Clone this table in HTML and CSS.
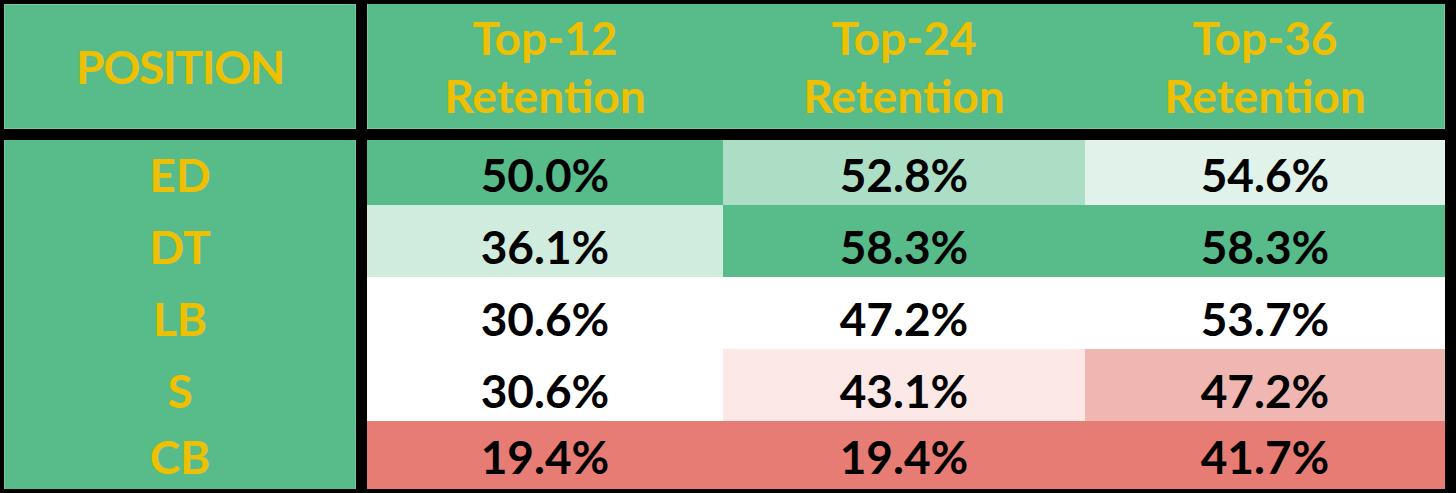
FILE: index.html
```html
<!DOCTYPE html>
<html lang="en">
<head>
<meta charset="utf-8">
<title>Retention by Position</title>
<link rel="stylesheet" href="styles.css">
</head>
<body>
<div class="table">
  <div class="cell head pos"><span class="tight">POSITION</span></div>
  <div class="cell head first">Top-12<br>Retention</div>
  <div class="cell head">Top-24<br>Retention</div>
  <div class="cell head end">Top-36<br>Retention</div>

  <div class="cell label pos">ED</div>
  <div class="cell val g100">50.0%</div>
  <div class="cell val g55">52.8%</div>
  <div class="cell val g18">54.6%</div>

  <div class="cell label pos">DT</div>
  <div class="cell val g28">36.1%</div>
  <div class="cell val g100">58.3%</div>
  <div class="cell val g100">58.3%</div>

  <div class="cell label pos">LB</div>
  <div class="cell val w">30.6%</div>
  <div class="cell val w">47.2%</div>
  <div class="cell val w">53.7%</div>

  <div class="cell label pos">S</div>
  <div class="cell val w">30.6%</div>
  <div class="cell val r15">43.1%</div>
  <div class="cell val r50">47.2%</div>

  <div class="cell label pos last">CB</div>
  <div class="cell val r100 last">19.4%</div>
  <div class="cell val r100 last">19.4%</div>
  <div class="cell val r100 last">41.7%</div>
</div>
</body>
</html>
```
FILE: styles.css
```css
html, body {
  margin: 0;
  padding: 0;
  background: #000;
}

.table {
  width: 1456px;
  height: 493px;
  box-sizing: border-box;
  padding: 4px 11px 4px 4px;
  background: #000;
  display: grid;
  grid-template-columns: 363px 356px 362px 360px;
  grid-template-rows: 136px 65px 72px 72px 72px 68px;
  font-family: Lato, "Open Sans", sans-serif;
  font-weight: 700;
  font-size: 46px;
}

.cell {
  box-sizing: border-box;
  display: flex;
  justify-content: center;
  text-align: center;
}

.pos {
  border-right: 11px solid #000;
}

.head {
  background: #57bb8a;
  color: #efc000;
  border-bottom: 11px solid #000;
  align-items: center;
  line-height: 58px;
  box-shadow: inset 0 -1px 0 rgba(255, 255, 255, 0.2);
}

.head.pos {
  box-shadow: inset 0 0 0 1px rgba(255, 255, 255, 0.2);
}

.head.first {
  box-shadow: inset 0 -1px 0 rgba(255, 255, 255, 0.2), inset 1px 0 0 rgba(255, 255, 255, 0.2);
}

.head.end {
  box-shadow: inset 0 -1px 0 rgba(255, 255, 255, 0.2), inset -1px 0 0 rgba(255, 255, 255, 0.2);
}

.tight {
  letter-spacing: -1.3px;
}

.label {
  background: #57bb8a;
  color: #efc000;
  align-items: flex-end;
  line-height: 1;
  padding-bottom: 7px;
  box-shadow: inset 1px 0 0 rgba(255, 255, 255, 0.18), inset -1px 0 0 rgba(255, 255, 255, 0.18);
}

.val {
  color: #000;
  align-items: flex-end;
  line-height: 1;
  padding-bottom: 7px;
}

.last {
  padding-bottom: 9px;
}

.g100 { background: #57bb8a; }
.g55  { background: #acdec6; }
.g28  { background: #d0ecde; }
.g18  { background: #e0f2e9; }
.w    { background: #ffffff; }
.r15  { background: #fbe8e7; }
.r50  { background: #f0b6b1; }
.r100 { background: #e67c73; }
```
